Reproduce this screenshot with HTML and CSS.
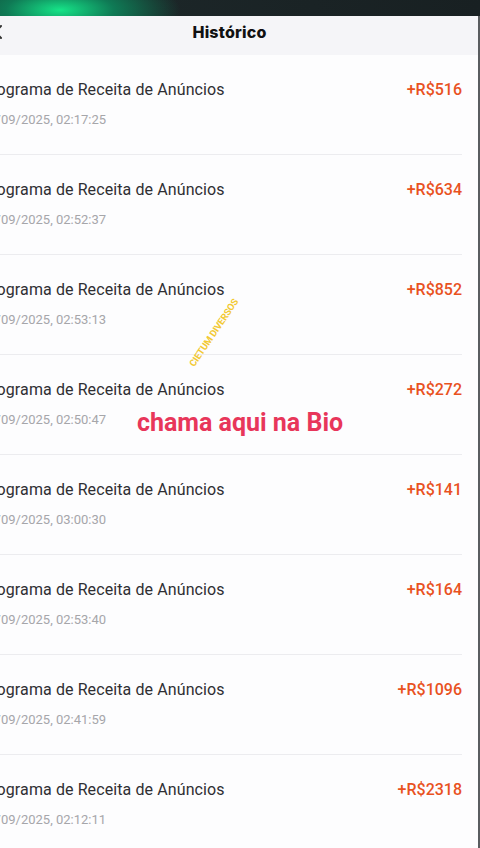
FILE: index.html
```html
<!DOCTYPE html>
<html lang="pt-BR">
<head>
    <meta charset="UTF-8">
    <meta name="viewport" content="width=device-width, initial-scale=1.0">
    <title>Histórico</title>
    <link rel="stylesheet" href="styles.css">
</head>
<body>
    <div class="topbar"></div>
    <div class="screen">
        <div class="header">
            <svg class="back" width="12" height="16" viewBox="0 0 12 16">
                <path d="M9 2 L3 8 L9 14" fill="none" stroke="#333" stroke-width="2" stroke-linecap="round" stroke-linejoin="round"/>
            </svg>
            <div class="title">Histórico</div>
        </div>
        <div class="list">
            <div class="item">
                <div class="item-main">
                    <div class="item-name">Programa de Receita de Anúncios</div>
                    <div class="item-date">22/09/2025, 02:17:25</div>
                </div>
                <div class="item-amount">+R$516</div>
            </div>
            <div class="item">
                <div class="item-main">
                    <div class="item-name">Programa de Receita de Anúncios</div>
                    <div class="item-date">22/09/2025, 02:52:37</div>
                </div>
                <div class="item-amount">+R$634</div>
            </div>
            <div class="item">
                <div class="item-main">
                    <div class="item-name">Programa de Receita de Anúncios</div>
                    <div class="item-date">22/09/2025, 02:53:13</div>
                </div>
                <div class="item-amount">+R$852</div>
            </div>
            <div class="item">
                <div class="item-main">
                    <div class="item-name">Programa de Receita de Anúncios</div>
                    <div class="item-date">22/09/2025, 02:50:47</div>
                </div>
                <div class="item-amount">+R$272</div>
            </div>
            <div class="item">
                <div class="item-main">
                    <div class="item-name">Programa de Receita de Anúncios</div>
                    <div class="item-date">22/09/2025, 03:00:30</div>
                </div>
                <div class="item-amount">+R$141</div>
            </div>
            <div class="item">
                <div class="item-main">
                    <div class="item-name">Programa de Receita de Anúncios</div>
                    <div class="item-date">22/09/2025, 02:53:40</div>
                </div>
                <div class="item-amount">+R$164</div>
            </div>
            <div class="item">
                <div class="item-main">
                    <div class="item-name">Programa de Receita de Anúncios</div>
                    <div class="item-date">22/09/2025, 02:41:59</div>
                </div>
                <div class="item-amount">+R$1096</div>
            </div>
            <div class="item">
                <div class="item-main">
                    <div class="item-name">Programa de Receita de Anúncios</div>
                    <div class="item-date">22/09/2025, 02:12:11</div>
                </div>
                <div class="item-amount">+R$2318</div>
            </div>
        </div>
    </div>

    <!-- video overlay texts -->
    <div class="stamp">CIETUM DIVERSOS</div>
    <div class="bio-note">chama aqui na Bio</div>
</body>
</html>
```

FILE: styles.css
```css
body {
    margin: 0;
    font-family: 'Roboto', 'Liberation Sans', sans-serif;
    background-color: #ffffff;
    overflow: hidden;
    height: 848px;
    position: relative;
}
.topbar {
    height: 16px;
    background: radial-gradient(ellipse 120px 40px at 60px 10px, #16e488 0%, #0f7a55 45%, rgba(20, 40, 38, 0) 100%), linear-gradient(90deg, #143a30 0%, #1c2628 30%, #182022 100%);
}
.screen {
    margin-left: -19px;
    width: 497px;
    border-right: 2px solid #5a5d60;
    background-color: #fdfdfe;
    height: 832px;
}
.header {
    height: 39px;
    box-sizing: border-box;
    padding-top: 6px;
    background-color: #f5f5f8;
    display: flex;
    justify-content: center;
    position: relative;
}
.back {
    position: absolute;
    left: 11px;
    top: 8px;
}
.title {
    font-family: 'Inter', 'Roboto', sans-serif;
    font-weight: 800;
    font-size: 16px;
    line-height: 20px;
    color: #111111;
    letter-spacing: 0.2px;
}
.list {
    padding-right: 16px;
}
.item {
    display: flex;
    justify-content: space-between;
    align-items: flex-start;
    height: 99px;
    border-bottom: 1px solid #ececef;
}
.item-main {
    padding-top: 25px;
}
.item-name {
    font-size: 16px;
    line-height: 20px;
    letter-spacing: 0.1px;
    color: #2f2f33;
}
.item-date {
    margin-top: 11px;
    font-size: 13px;
    line-height: 18px;
    color: #a6a6aa;
}
.item-amount {
    padding-top: 25px;
    font-size: 16px;
    line-height: 20px;
    font-weight: 500;
    color: #e9521f;
}
.stamp {
    position: absolute;
    left: 174px;
    top: 327px;
    font-size: 9.5px;
    font-weight: 700;
    color: #f2c933;
    transform: rotate(-56deg);
    letter-spacing: -0.2px;
    white-space: nowrap;
}
.bio-note {
    position: absolute;
    left: 0;
    right: 0;
    top: 408px;
    text-align: center;
    font-size: 25px;
    line-height: 30px;
    font-weight: 700;
    color: #e8365a;
}
```
